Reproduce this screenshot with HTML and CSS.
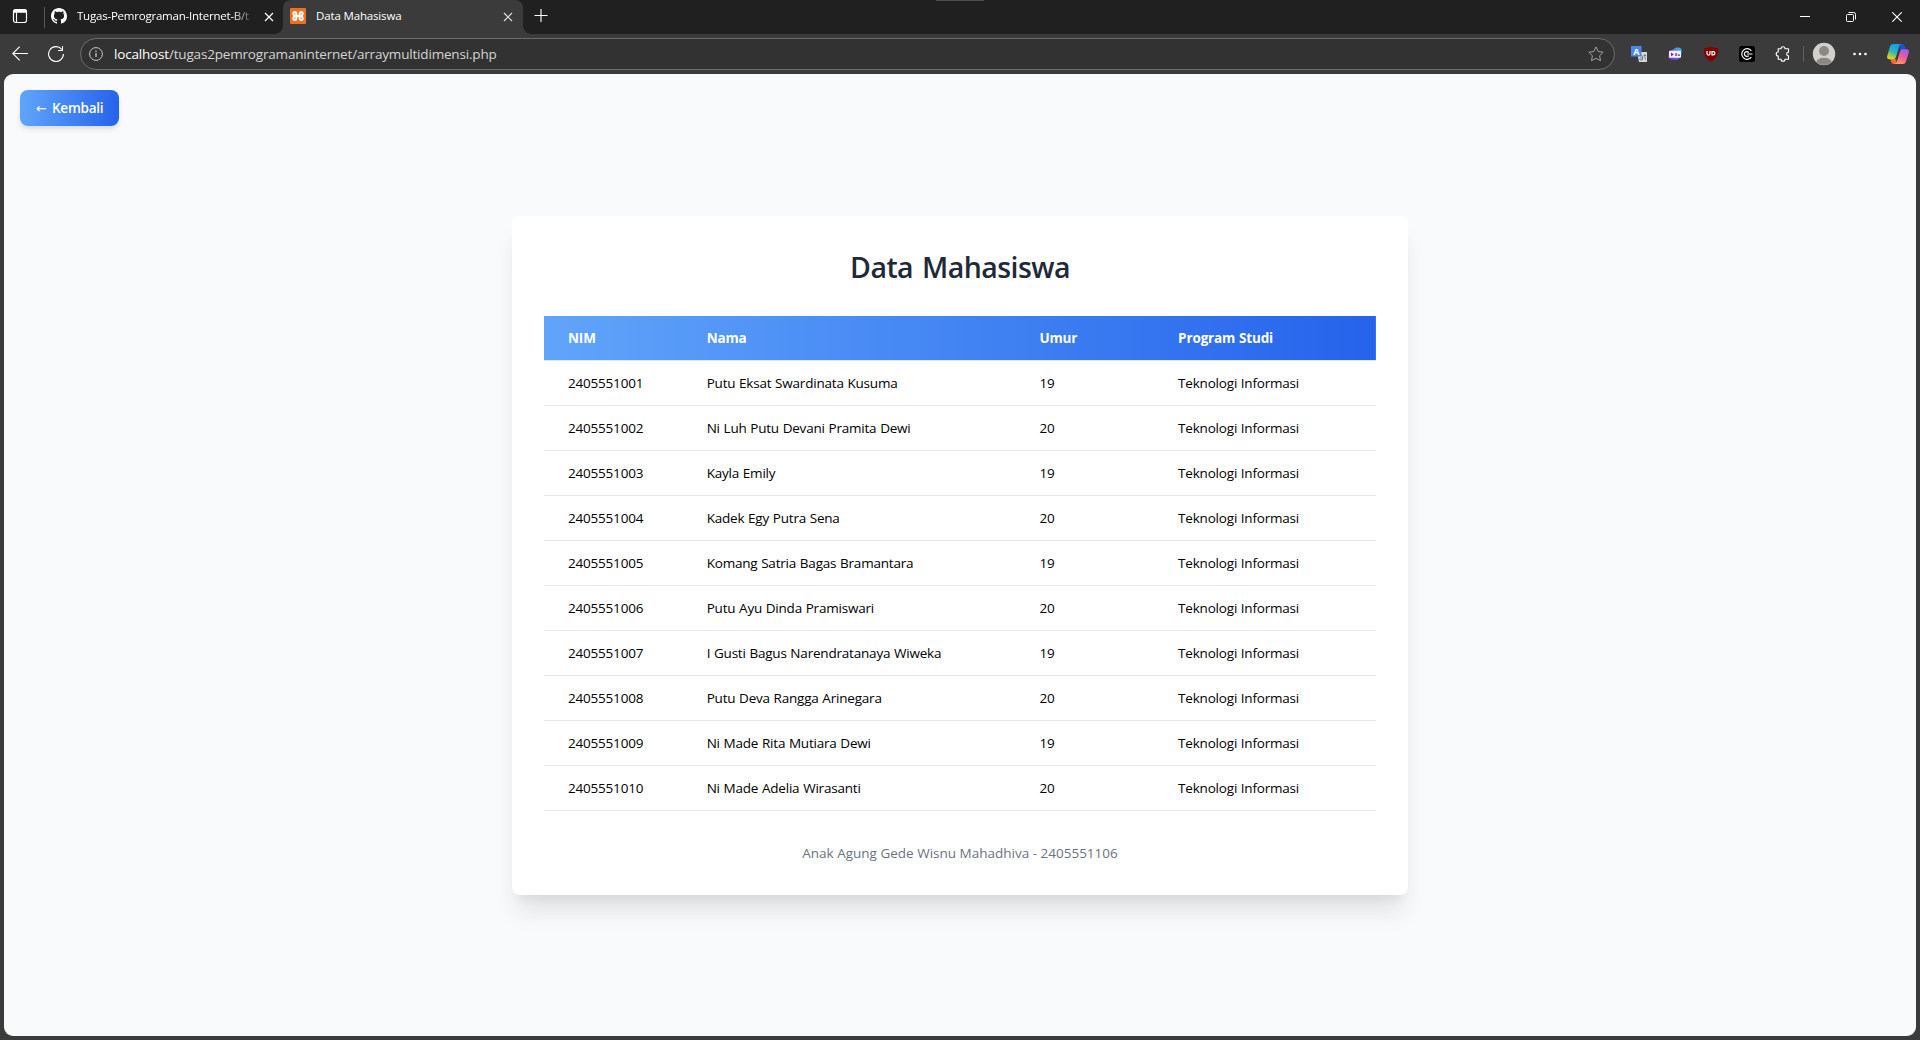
FILE: index.html
```html
<!DOCTYPE html>
<html lang="id">
<head>
<meta charset="utf-8">
<title>Data Mahasiswa</title>
<link rel="stylesheet" href="styles.css">
</head>
<body>
<div class="window">
  <header class="tabstrip">
    <div class="tab-menu">
      <svg width="16" height="16" viewBox="0 0 16 16" fill="none" stroke="#fff"><rect x="1.5" y="1.5" width="13" height="13" rx="2.2" stroke-width="1.2"/><path d="M1.5 4.2V3.5a2 2 0 0 1 2-2h9a2 2 0 0 1 2 2v.7z" fill="#fff"/><path d="M4.5 4v10.5" stroke-width="1.1"/></svg>
    </div>
    <div class="tab tab-idle">
      <svg width="16" height="16" viewBox="0 0 16 16" fill="#fff"><path d="M8 0C3.58 0 0 3.58 0 8c0 3.54 2.29 6.53 5.47 7.59.4.07.55-.17.55-.38 0-.19-.01-.82-.01-1.49-2.01.37-2.53-.49-2.69-.94-.09-.23-.48-.94-.82-1.13-.28-.15-.68-.52-.01-.53.63-.01 1.08.58 1.23.82.72 1.21 1.87.87 2.33.66.07-.52.28-.87.51-1.07-1.78-.2-3.64-.89-3.64-3.95 0-.87.31-1.59.82-2.15-.08-.2-.36-1.02.08-2.12 0 0 .67-.21 2.2.82.64-.18 1.32-.27 2-.27s1.36.09 2 .27c1.53-1.04 2.2-.82 2.2-.82.44 1.1.16 1.92.08 2.12.51.56.82 1.27.82 2.15 0 3.07-1.87 3.75-3.65 3.95.29.25.54.73.54 1.48 0 1.07-.01 1.93-.01 2.2 0 .21.15.46.55.38A8.01 8.01 0 0 0 16 8c0-4.42-3.58-8-8-8z"/></svg>
      <span class="tab-title tab-title-long">Tugas-Pemrograman-Internet-B/t</span>
      <svg class="tab-close" width="10" height="10" viewBox="0 0 10 10" stroke="#fff" stroke-width="1.2"><path d="M1 1l8 8M9 1L1 9"/></svg>
    </div>
    <div class="tab tab-active">
      <svg width="16" height="16" viewBox="0 0 16 16"><rect width="16" height="16" rx="1" fill="#ee6f1f"/><path d="M6.300 8.200V5.600c0-2-3-2-3 0C3.300 6.700 4.200 7.200 4.200 8s-.9 1.300-.9 2.400c0 2 3 2 3 0M9.700 8.200V5.600c0-2 3-2 3 0 0 1.100-.9 1.600-.9 2.400s.9 1.300.9 2.400c0 2-3 2-3 0M6.300 10.400V8h3.400v2.400" fill="none" stroke="#fff" stroke-width="2" stroke-linejoin="round"/></svg>
      <span class="tab-title">Data Mahasiswa</span>
      <svg class="tab-close" width="10" height="10" viewBox="0 0 10 10" stroke="#ddd" stroke-width="1.2"><path d="M1 1l8 8M9 1L1 9"/></svg>
    </div>
    <svg class="new-tab" width="14" height="14" viewBox="0 0 14 14" stroke="#fff" stroke-width="1.1"><path d="M.5 7.500h13M7 1v13"/></svg>
    <div class="grip"></div>
    <div class="controls">
      <svg width="10" height="10" viewBox="0 0 10 10" stroke="#fff"><path d="M0 4.500h10"/></svg>
      <svg width="10" height="10" viewBox="0 0 10 10" stroke="#fff" fill="none"><rect x=".5" y="2.500" width="7" height="7" rx="1"/><path d="M2.500 .5h5.200a1.800 1.800 0 0 1 1.800 1.800V7.500"/></svg>
      <svg width="10" height="10" viewBox="0 0 10 10" stroke="#fff" stroke-width="1.1"><path d="M.3.3l9.400 9.400M9.700.3L.3 9.700"/></svg>
    </div>
  </header>

  <nav class="toolbar">
    <svg class="back" width="16" height="16" viewBox="0 0 16 16" fill="none" stroke="#fff" stroke-width="1.1"><path d="M16 7.500H.8M7.700.7L.8 7.500l6.900 6.800"/></svg>
    <svg class="reload" width="16" height="16" viewBox="0 0 16 16" fill="none" stroke="#fff" stroke-width="1.1"><path d="M15.400 8A7.400 7.400 0 1 1 13.700 3.300M14.500.3v4.200h-4.400"/></svg>
    <div class="address">
      <svg width="14" height="14" viewBox="0 0 14 14" fill="none" stroke="#c8c8c8"><circle cx="7" cy="7" r="6.400"/><path d="M7 6v4" stroke-width="1.300"/><circle cx="7" cy="4.200" r=".8" fill="#c8c8c8" stroke="none"/></svg>
      <span class="url"><span class="host">localhost</span>/tugas2pemrogramaninternet/arraymultidimensi.php</span>
      <svg width="16" height="16" viewBox="0 0 16 16" fill="none" stroke="#a0a0a0" stroke-linejoin="round"><path d="M8 .9l2.200 4.600 5 .7-3.600 3.500.9 5L8 12.300l-4.500 2.400.9-5L.8 6.200l5-.7z"/></svg>
    </div>
    <div class="extensions">
      <svg width="16" height="16" viewBox="0 0 16 16"><path d="M6 6h10v10H8z" fill="#d4dbe0"/><rect width="10.500" height="10.500" fill="#4d86ea"/><text x="5.200" y="8.700" class="glyph-a">A</text><path d="M8.500 9.500c1.800-.8 3 .2 3 1.500v3M11.500 11.800c-3-.2-3.500 2.400-1.500 2.400 1 0 1.500-.8 1.500-1.500M12.500 9.500h2.700M13.800 8.200c-.3 3 .2 4.500 1 5.500" stroke="#6b7c88" fill="none" stroke-width="1"/></svg>
      <svg width="16" height="16" viewBox="0 0 16 16"><defs><linearGradient id="aiA" x1="1" y1="0" x2="0" y2="1"><stop offset="0" stop-color="#29c6f6"/><stop offset=".55" stop-color="#7a55f0"/><stop offset="1" stop-color="#6b2be0"/></linearGradient></defs><path d="M5 4l4-2.500 4 .2 1.800 2-.8 7-4 3.300-6-.3-3-2.300 1-5z" fill="url(#aiA)"/><rect x="2" y="4.800" width="12" height="7" rx=".8" fill="#f5efff"/><path d="M4 6.500l3 1.900-3 1.900z" fill="#6b25e8"/><path d="M8.200 7h2v3h-2zM11 8.300h2V10h-2z" fill="#78708c"/></svg>
      <svg width="16" height="16" viewBox="0 0 16 16"><path d="M8 .5c2.200 1.200 4.500 1.700 7 1.700 0 6.500-.6 9.800-7 13.400C1.600 12 1 8.700 1 2.200c2.500 0 4.800-.5 7-1.700z" fill="#800000"/><path d="M4 5v2.600a1.500 1.500 0 0 0 3 0V5M9 5.600v3.200h1.300a1.600 1.600 0 0 0 0-3.200z" fill="none" stroke="#fff" stroke-width="1.200"/></svg>
      <svg width="16" height="16" viewBox="0 0 16 16"><rect width="16" height="16" rx="2.500" fill="#000"/><path d="M12.300 4.800a5.300 5.300 0 1 0 0 6.400M9.700 6.500a2.400 2.400 0 1 0 0 3M8 8h5.500" fill="none" stroke="#fff" stroke-width="1.200"/></svg>
      <svg width="16" height="16" viewBox="0 0 16 16" fill="none" stroke="#fff" stroke-width="1.100" stroke-linejoin="round"><path d="M6 2.700a2 2 0 0 1 4 0h3.500v3.500a1.800 1.800 0 1 0 0 3.600v3.500H10a2 2 0 0 1-4 0H3.200v-3.300a2 2 0 0 1 0-4V2.700z"/></svg>
    </div>
    <i class="separator"></i>
    <svg class="avatar" width="24" height="24" viewBox="0 0 24 24"><defs><clipPath id="face"><circle cx="12" cy="12" r="11"/></clipPath></defs><circle cx="12" cy="12" r="11.200" fill="#d3d0cc"/><g clip-path="url(#face)" fill="#8c8885"><circle cx="12" cy="9" r="5"/><ellipse cx="12" cy="20.500" rx="7.800" ry="4.700"/></g></svg>
    <svg class="more" width="16" height="16" viewBox="0 0 16 16" fill="#fff"><circle cx="2.500" cy="8" r="1.300"/><circle cx="8" cy="8" r="1.300"/><circle cx="13.500" cy="8" r="1.300"/></svg>
    <svg class="copilot" width="22" height="20" viewBox="0 0 22 20">
      <defs>
        <linearGradient id="cpA" x1=".6" y1="0" x2=".2" y2="1"><stop offset="0" stop-color="#149bf0"/><stop offset=".5" stop-color="#2bb6c0"/><stop offset=".75" stop-color="#9bcb45"/><stop offset="1" stop-color="#ffc91f"/></linearGradient>
        <linearGradient id="cpB" x1=".7" y1="0" x2=".3" y2="1"><stop offset="0" stop-color="#a35bf0"/><stop offset=".5" stop-color="#ec5aa0"/><stop offset="1" stop-color="#ff9b52"/></linearGradient>
      </defs>
      <path d="M13 0h2.500q1.700 0 2.300 1.900L19 6h-4.500q-1.300 0-1.800-1.500z" fill="#1453c8"/>
      <path d="M9 20H6.500q-1.700 0-2.300-1.900L3.300 15H8q1.100 0 1.500 1.500z" fill="#f4683a"/>
      <path d="M6 0h8.500q-1.700.3-2.300 2.300L9 13q-.7 2.300-2.600 2.300H2.300Q-.5 15.300.2 12L3 2.600Q3.800 0 6 0z" fill="url(#cpA)"/>
      <path d="M16 20H7.500q1.700-.3 2.300-2.300L13 7.500q.6-2.300 2.600-2.300h4.100q2.800 0 2.100 3.300L19 17.400Q18.200 20 16 20z" fill="url(#cpB)"/>
    </svg>
  </nav>

  <main class="page">
    <a class="back-button"><span class="arrow">←</span>Kembali</a>
    <section class="card">
      <h1>Data Mahasiswa</h1>
      <table>
        <colgroup><col class="col-nim"><col class="col-nama"><col class="col-umur"><col></colgroup>
        <thead><tr><th>NIM</th><th>Nama</th><th>Umur</th><th>Program Studi</th></tr></thead>
        <tbody>
          <tr><td>2405551001</td><td>Putu Eksat Swardinata Kusuma</td><td>19</td><td>Teknologi Informasi</td></tr>
          <tr><td>2405551002</td><td>Ni Luh Putu Devani Pramita Dewi</td><td>20</td><td>Teknologi Informasi</td></tr>
          <tr><td>2405551003</td><td>Kayla Emily</td><td>19</td><td>Teknologi Informasi</td></tr>
          <tr><td>2405551004</td><td>Kadek Egy Putra Sena</td><td>20</td><td>Teknologi Informasi</td></tr>
          <tr><td>2405551005</td><td>Komang Satria Bagas Bramantara</td><td>19</td><td>Teknologi Informasi</td></tr>
          <tr><td>2405551006</td><td>Putu Ayu Dinda Pramiswari</td><td>20</td><td>Teknologi Informasi</td></tr>
          <tr><td>2405551007</td><td>I Gusti Bagus Narendratanaya Wiweka</td><td>19</td><td>Teknologi Informasi</td></tr>
          <tr><td>2405551008</td><td>Putu Deva Rangga Arinegara</td><td>20</td><td>Teknologi Informasi</td></tr>
          <tr><td>2405551009</td><td>Ni Made Rita Mutiara Dewi</td><td>19</td><td>Teknologi Informasi</td></tr>
          <tr><td>2405551010</td><td>Ni Made Adelia Wirasanti</td><td>20</td><td>Teknologi Informasi</td></tr>
        </tbody>
      </table>
      <p class="credit">Anak Agung Gede Wisnu Mahadhiva - 2405551106</p>
    </section>
  </main>
</div>
</body>
</html>
```
FILE: styles.css
```css
* { box-sizing: border-box; }

body {
  margin: 0;
  font-family: "Open Sans", "Noto Sans", sans-serif;
  font-size: 13.5px;
  letter-spacing: -0.2px;
}

svg { display: block; flex: none; }

.window {
  display: flex;
  flex-direction: column;
  width: 1920px;
  height: 1040px;
  background: #3b3b3b;
  overflow: hidden;
}

/* Tab strip */
.tabstrip {
  position: relative;
  display: flex;
  height: 34px;
  flex: none;
  background: #202020;
  color: #fff;
}

.tab-menu {
  display: flex;
  width: 45px;
  height: 21px;
  margin-top: 7px;
  padding: 1px 0 0 12px;
  border-right: 1px solid #5a5a5a;
}

.tab {
  display: flex;
  align-items: center;
  padding-bottom: 2px;
}

.tab-idle { width: 238px; padding-left: 6px; }

.tab-active {
  position: relative;
  width: 240px;
  padding-left: 7px;
  background: #3b3b3b;
  border-radius: 8px 8px 0 0;
}

.tab-active::before,
.tab-active::after {
  content: "";
  position: absolute;
  bottom: 0;
  width: 8px;
  height: 8px;
}

.tab-active::before {
  left: -8px;
  background: radial-gradient(circle at 0 0, transparent 7.5px, #3b3b3b 8px);
}

.tab-active::after {
  right: -8px;
  background: radial-gradient(circle at 100% 0, transparent 7.5px, #3b3b3b 8px);
}

.tab-title {
  flex: 1;
  margin-left: 10px;
  font-size: 11.5px;
  line-height: 16px;
  letter-spacing: -0.15px;
  white-space: nowrap;
  overflow: hidden;
}

.tab-title-long {
  flex: none;
  width: 178px;
  letter-spacing: -0.22px;
  -webkit-mask-image: linear-gradient(90deg, #000 155px, transparent 180px);
  mask-image: linear-gradient(90deg, #000 155px, transparent 180px);
}

.tab-idle .tab-close { margin-left: 9px; }
.tab-active .tab-close { margin-right: 10px; }
.tab-close { margin-top: 1px; }

.new-tab { margin: 8px 0 0 11px; }

.grip {
  position: absolute;
  top: 0;
  left: 936px;
  width: 48px;
  height: 1px;
  background: #4c4c4c;
}

.controls {
  display: flex;
  gap: 36px;
  margin: 12px 18px 0 auto;
}

/* Toolbar */
.toolbar {
  display: flex;
  align-items: center;
  height: 40px;
  flex: none;
}

.back { margin-left: 12px; }
.reload { margin-left: 20px; }

.address {
  display: flex;
  align-items: center;
  width: 1535px;
  height: 32px;
  margin-left: 16px;
  padding: 0 10px 0 8px;
  border: 1px solid #6c6c6c;
  border-radius: 16px;
  background: #323232;
}

.url {
  flex: 1;
  margin-left: 11px;
  letter-spacing: -0.18px;
  color: #d4d4d4;
}

.host { color: #fff; }

.extensions {
  display: flex;
  gap: 20px;
  margin-left: 16px;
}

.glyph-a {
  font-size: 9px;
  font-weight: 700;
  text-anchor: middle;
  fill: #fff;
}

.separator {
  width: 1px;
  height: 16px;
  margin-left: 12px;
  background: #606060;
}

.avatar { margin-left: 8px; }
.more { margin-left: 16px; }
.copilot { margin-left: 19px; }

/* Page */
.page {
  position: relative;
  display: flex;
  align-items: flex-start;
  justify-content: center;
  height: 962px;
  margin: 0 4px;
  padding-top: 142px;
  border-radius: 9px;
  background: #f9fafc;
}

.back-button {
  position: absolute;
  top: 16px;
  left: 16px;
  display: flex;
  align-items: center;
  width: 99px;
  height: 36px;
  padding-left: 16px;
  border-radius: 8px;
  background: linear-gradient(90deg, #60a5fa, #2563eb);
  box-shadow: 0 4px 6px -1px rgba(0, 0, 0, 0.1), 0 2px 4px -1px rgba(0, 0, 0, 0.06);
  color: #fff;
  font-weight: 600;
  letter-spacing: -0.25px;
}

.arrow {
  width: 16px;
  font-family: "DejaVu Sans", sans-serif;
  font-size: 13px;
  font-weight: 400;
}

.card {
  width: 896px;
  height: 679px;
  padding: 32px;
  border-radius: 8px;
  background: #fff;
  box-shadow: 0 20px 25px -5px rgba(0, 0, 0, 0.1), 0 10px 10px -5px rgba(0, 0, 0, 0.04);
}

h1 {
  height: 36px;
  margin: 0 0 32px;
  padding-top: 1px;
  font-size: 28.5px;
  font-weight: 600;
  line-height: 36px;
  letter-spacing: -0.55px;
  word-spacing: 2px;
  text-align: center;
  color: #1f2937;
}

table {
  width: 832px;
  table-layout: fixed;
  border-spacing: 0;
}

.col-nim, .col-umur { width: 138.67px; }
.col-nama { width: 332.8px; }

thead tr { background: linear-gradient(90deg, #60a5fa, #2563eb); }

th, td {
  height: 45px;
  padding: 0 24px 1px;
  border-bottom: 1px solid #e5e7eb;
  text-align: left;
  white-space: nowrap;
  word-spacing: 0.4px;
}

th { background-clip: padding-box; color: #fff; font-weight: 700; letter-spacing: -0.15px; }
td { color: #000; }

.credit {
  margin: 32px 0 0;
  line-height: 20px;
  letter-spacing: 0;
  text-align: center;
  color: #6b7280;
}
```
